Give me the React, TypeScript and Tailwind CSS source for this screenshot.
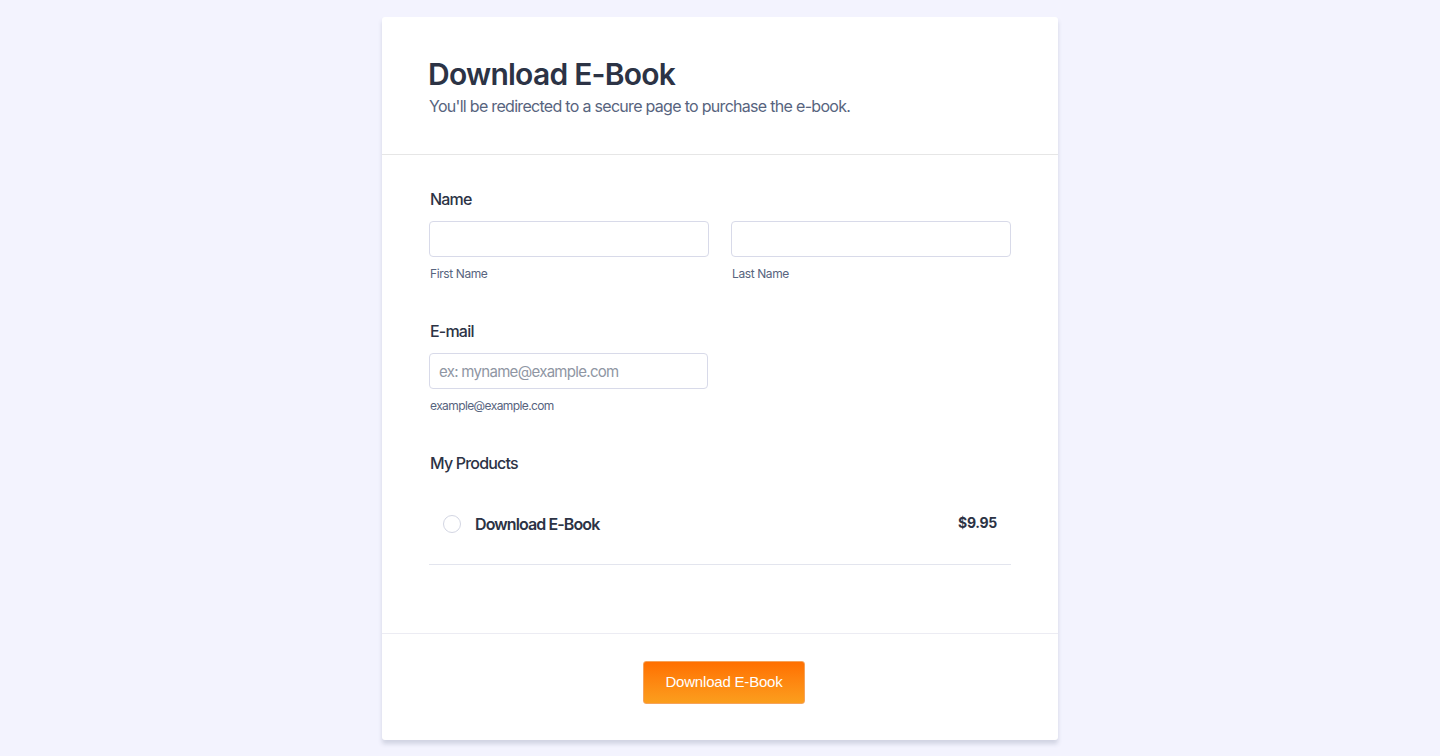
import React from "react";

export default function App() {
  return (
    <div className="min-h-[756px] w-full bg-[#f3f3fe] pt-[17px] pb-[16px] [font-family:Inter,'Noto_Sans',sans-serif]">
      <div className="mx-auto w-[676px] rounded-[3px] bg-white shadow-[0_4px_4px_rgba(87,100,126,0.21)]">
        <div className="border-b border-[#e6e6e6] px-[47px] pt-[39px] pb-[36px]">
          <h1 className="-ml-[1px] text-[30px] leading-[36px] font-semibold text-[#2c3345] tracking-[-0.75px]">Download E-Book</h1>
          <p className="mt-[2px] text-[16px] leading-[24px] text-[#57647e] tracking-[-0.7px]">
            You'll be redirected to a secure page to purchase the e-book.
          </p>
        </div>
        <div className="px-[47px] pt-[32px] pb-[68px]">
          <div className="px-[1px] text-[16px] leading-[24px] font-medium text-[#2c3345] tracking-[-0.8px]">Name</div>
          <div className="mt-[10px] flex gap-[22px]">
            <div className="w-[281px]">
              <input className="block h-[36px] w-full rounded-[4px] border border-[#d8dae9] bg-white px-[10px] text-[16px] outline-none" />
              <div className="mt-[9px] px-[1px] text-[12px] leading-[16px] text-[#57647e] tracking-[-0.4px]">First Name</div>
            </div>
            <div className="w-[281px]">
              <input className="block h-[36px] w-full rounded-[4px] border border-[#d8dae9] bg-white px-[10px] text-[16px] outline-none" />
              <div className="mt-[9px] px-[1px] text-[12px] leading-[16px] text-[#57647e] tracking-[-0.4px]">Last Name</div>
            </div>
          </div>

          <div className="mt-[37px] px-[1px] text-[16px] leading-[24px] font-medium text-[#2c3345] tracking-[-0.8px]">E-mail</div>
          <div className="mt-[10px] w-[279px]">
            <input
              placeholder="ex: myname@example.com"
              className="block h-[36px] w-full rounded-[4px] border border-[#d8dae9] bg-white px-[9px] text-[15px] tracking-[-0.7px] text-[#2c3345] placeholder:text-[#8f96a3] outline-none"
            />
            <div className="mt-[9px] px-[1px] text-[12px] leading-[16px] text-[#57647e] tracking-[-0.6px]">example@example.com</div>
          </div>

          <div className="mt-[37px] px-[1px] text-[16px] leading-[24px] font-medium text-[#2c3345] tracking-[-0.8px]">My Products</div>
          <div className="mt-[9px] flex h-[81px] items-center justify-between border-b border-[#e3e5ee] px-[14px]">
            <div className="flex items-center gap-[14px]">
              <span className="block h-[18px] w-[18px] rounded-full border border-[#d3d6e3] bg-white"></span>
              <span className="text-[16px] leading-[24px] font-semibold text-[#2c3345] tracking-[-0.9px]">Download E-Book</span>
            </div>
            <span className="-mt-[3px] text-[14px] leading-[20px] font-bold text-[#2c3345] tracking-[-0.3px]">$9.95</span>
          </div>
        </div>
        <div className="flex justify-center border-t border-[#ececf3] pt-[27px] pb-[36px]">
          <button className="ml-[8px] h-[43px] w-[162px] rounded-[3px] border border-[#f6a35a] bg-gradient-to-b from-[#ff6f00] to-[#fb9e1d] text-[15px] tracking-[-0.2px] text-white [font-family:'Liberation_Sans',Arial,sans-serif]">
            Download E-Book
          </button>
        </div>
      </div>
    </div>
  );
}
